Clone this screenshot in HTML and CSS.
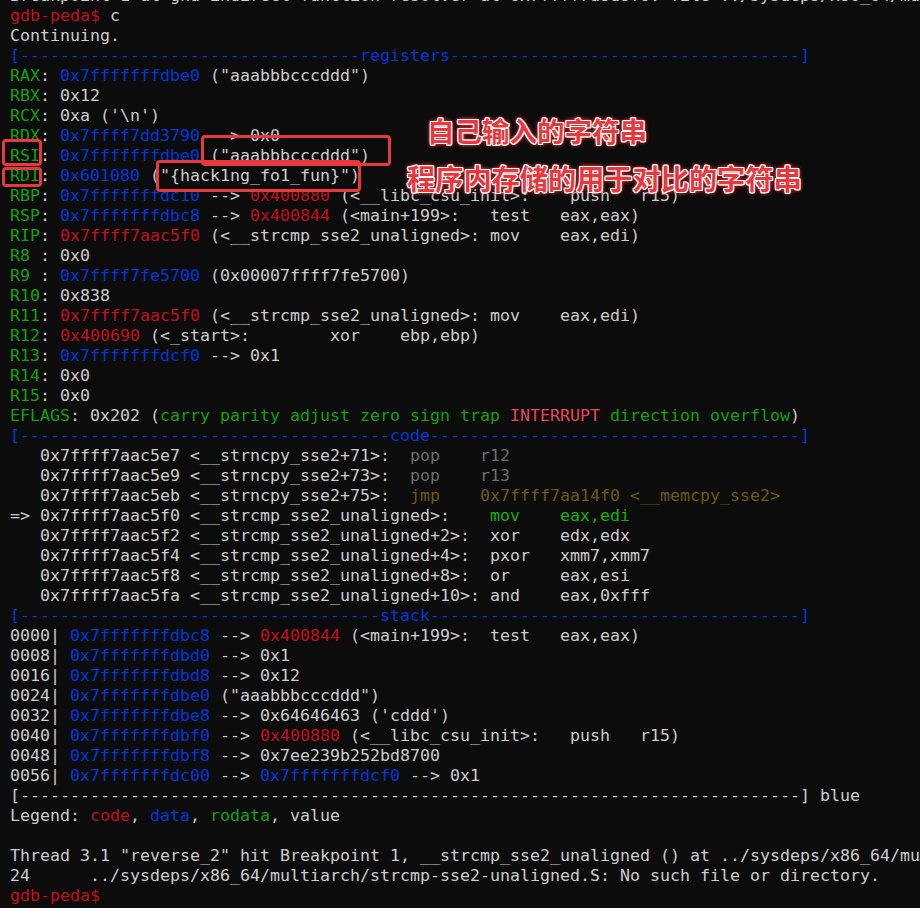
FILE: index.html
```html
<!DOCTYPE html>
<html>
<head>
<meta charset="utf-8">
<link rel="stylesheet" href="styles.css">
</head>
<body>
<div class="screen">
<div class="term">
<div class="ln">Breakpoint 1 at gnu-indirect-function resolver at 0x7ffff7a8d8f0: file ../sysdeps/x86_64/multiarch/strcmp.S, line 28.</div>
<div class="ln"><span class="r">gdb-peda$</span> c</div>
<div class="ln">Continuing.</div>
<div class="ln b">[----------------------------------registers-----------------------------------]</div>
<div class="ln"><span class="g">RAX</span>: <span class="b">0x7fffffffdbe0</span> ("aaabbbcccddd")</div>
<div class="ln"><span class="g">RBX</span>: 0x12</div>
<div class="ln"><span class="g">RCX</span>: 0xa ('\n')</div>
<div class="ln"><span class="g">RDX</span>: <span class="b">0x7ffff7dd3790</span> --&gt; 0x0</div>
<div class="ln"><span class="g">RSI</span>: <span class="b">0x7fffffffdbe0</span> ("aaabbbcccddd")</div>
<div class="ln"><span class="g">RDI</span>: <span class="b">0x601080</span> ("{hack1ng_fo1_fun}")</div>
<div class="ln"><span class="g">RBP</span>: <span class="b">0x7fffffffdc10</span> --&gt; <span class="r">0x400880</span> (&lt;__libc_csu_init&gt;:    push   r15)</div>
<div class="ln"><span class="g">RSP</span>: <span class="b">0x7fffffffdbc8</span> --&gt; <span class="r">0x400844</span> (&lt;main+199&gt;:   test   eax,eax)</div>
<div class="ln"><span class="g">RIP</span>: <span class="r">0x7ffff7aac5f0</span> (&lt;__strcmp_sse2_unaligned&gt;: mov    eax,edi)</div>
<div class="ln"><span class="g">R8 </span>: 0x0</div>
<div class="ln"><span class="g">R9 </span>: <span class="b">0x7ffff7fe5700</span> (0x00007ffff7fe5700)</div>
<div class="ln"><span class="g">R10</span>: 0x838</div>
<div class="ln"><span class="g">R11</span>: <span class="r">0x7ffff7aac5f0</span> (&lt;__strcmp_sse2_unaligned&gt;: mov    eax,edi)</div>
<div class="ln"><span class="g">R12</span>: <span class="r">0x400690</span> (&lt;_start&gt;:        xor    ebp,ebp)</div>
<div class="ln"><span class="g">R13</span>: <span class="b">0x7fffffffdcf0</span> --&gt; 0x1</div>
<div class="ln"><span class="g">R14</span>: 0x0</div>
<div class="ln"><span class="g">R15</span>: 0x0</div>
<div class="ln"><span class="g">EFLAGS</span>: 0x202 (<span class="g">carry parity adjust zero sign trap</span> <span class="rb">INTERRUPT</span> <span class="g">direction overflow</span>)</div>
<div class="ln b">[-------------------------------------code-------------------------------------]</div>
<div class="ln">   0x7ffff7aac5e7 &lt;__strncpy_sse2+71&gt;:  <span class="d">pop    r12</span></div>
<div class="ln">   0x7ffff7aac5e9 &lt;__strncpy_sse2+73&gt;:  <span class="d">pop    r13</span></div>
<div class="ln">   0x7ffff7aac5eb &lt;__strncpy_sse2+75&gt;:  <span class="y">jmp    0x7ffff7aa14f0 &lt;__memcpy_sse2&gt;</span></div>
<div class="ln">=&gt; 0x7ffff7aac5f0 &lt;__strcmp_sse2_unaligned&gt;:    <span class="gc">mov    eax,edi</span></div>
<div class="ln">   0x7ffff7aac5f2 &lt;__strcmp_sse2_unaligned+2&gt;:  xor    edx,edx</div>
<div class="ln">   0x7ffff7aac5f4 &lt;__strcmp_sse2_unaligned+4&gt;:  pxor   xmm7,xmm7</div>
<div class="ln">   0x7ffff7aac5f8 &lt;__strcmp_sse2_unaligned+8&gt;:  or     eax,esi</div>
<div class="ln">   0x7ffff7aac5fa &lt;__strcmp_sse2_unaligned+10&gt;: and    eax,0xfff</div>
<div class="ln b">[------------------------------------stack-------------------------------------]</div>
<div class="ln">0000| <span class="b">0x7fffffffdbc8</span> --&gt; <span class="r">0x400844</span> (&lt;main+199&gt;:  test   eax,eax)</div>
<div class="ln">0008| <span class="b">0x7fffffffdbd0</span> --&gt; 0x1</div>
<div class="ln">0016| <span class="b">0x7fffffffdbd8</span> --&gt; 0x12</div>
<div class="ln">0024| <span class="b">0x7fffffffdbe0</span> ("aaabbbcccddd")</div>
<div class="ln">0032| <span class="b">0x7fffffffdbe8</span> --&gt; 0x64646463 ('cddd')</div>
<div class="ln">0040| <span class="b">0x7fffffffdbf0</span> --&gt; <span class="r">0x400880</span> (&lt;__libc_csu_init&gt;:   push   r15)</div>
<div class="ln">0048| <span class="b">0x7fffffffdbf8</span> --&gt; 0x7ee239b252bd8700</div>
<div class="ln">0056| <span class="b">0x7fffffffdc00</span> --&gt; <span class="b">0x7fffffffdcf0</span> --&gt; 0x1</div>
<div class="ln">[------------------------------------------------------------------------------] blue</div>
<div class="ln">Legend: <span class="r">code</span>, <span class="b">data</span>, <span class="g">rodata</span>, value</div>
<div class="ln"> </div>
<div class="ln">Thread 3.1 "reverse_2" hit Breakpoint 1, __strcmp_sse2_unaligned () at ../sysdeps/x86_64/multiarch/strcmp-sse2-unaligned.S:24</div>
<div class="ln">24      ../sysdeps/x86_64/multiarch/strcmp-sse2-unaligned.S: No such file or directory.</div>
<div class="ln"><span class="r">gdb-peda$</span></div>
</div>
<div class="box box-rsi"></div>
<div class="box box-rdi"></div>
<div class="box box-s1"></div>
<div class="box box-s2"></div>
<div class="note note1">自己输入的字符串</div>
<div class="note note2">程序内存储的用于对比的字符串</div>
</div>
</body>
</html>
```
FILE: styles.css
```css
html, body {
  margin: 0;
  padding: 0;
  background: #0c0c0c;
}
.screen {
  position: relative;
  width: 920px;
  height: 908px;
  overflow: hidden;
  background: #0c0c0c;
}
.term {
  margin-top: -14px;
  padding-left: 10px;
  font-family: "DejaVu Sans Mono", monospace;
  font-size: 16.61px;
  line-height: 20px;
  color: #cccccc;
}
.ln {
  height: 20px;
  white-space: pre;
}
.r { color: #c50f1f; }
.b { color: #0037da; }
.g { color: #13a10e; }
.rb { color: #e74856; }
.d { color: #6e6e6e; }
.y { color: #6b5a10; }
.gc { color: #16b00e; }
.box {
  position: absolute;
  border: 3px solid #e8383d;
  border-radius: 4px;
  box-sizing: border-box;
}
.box-rsi { left: 2px; top: 139px; width: 40px; height: 27px; }
.box-rdi { left: 2px; top: 167px; width: 40px; height: 20px; }
.box-s1 { left: 201px; top: 135px; width: 190px; height: 31px; }
.box-s2 { left: 156px; top: 160px; width: 205px; height: 32px; }
.note {
  position: absolute;
  font-family: "Noto Sans CJK SC", sans-serif;
  font-weight: 700;
  line-height: 1;
  color: #e8383d;
  white-space: nowrap;
  text-shadow:
    1px 0 0 #fff, -1px 0 0 #fff, 0 1px 0 #fff, 0 -1px 0 #fff,
    1px 1px 0 #fff, -1px -1px 0 #fff, 1px -1px 0 #fff, -1px 1px 0 #fff,
    0 0 3px #e8383d, 0 0 5px #e8383d, 0 0 5px #e8383d;
}
.note1 { left: 427px; top: 117px; font-size: 27.5px; }
.note2 { left: 407px; top: 164px; font-size: 28.2px; }
```
